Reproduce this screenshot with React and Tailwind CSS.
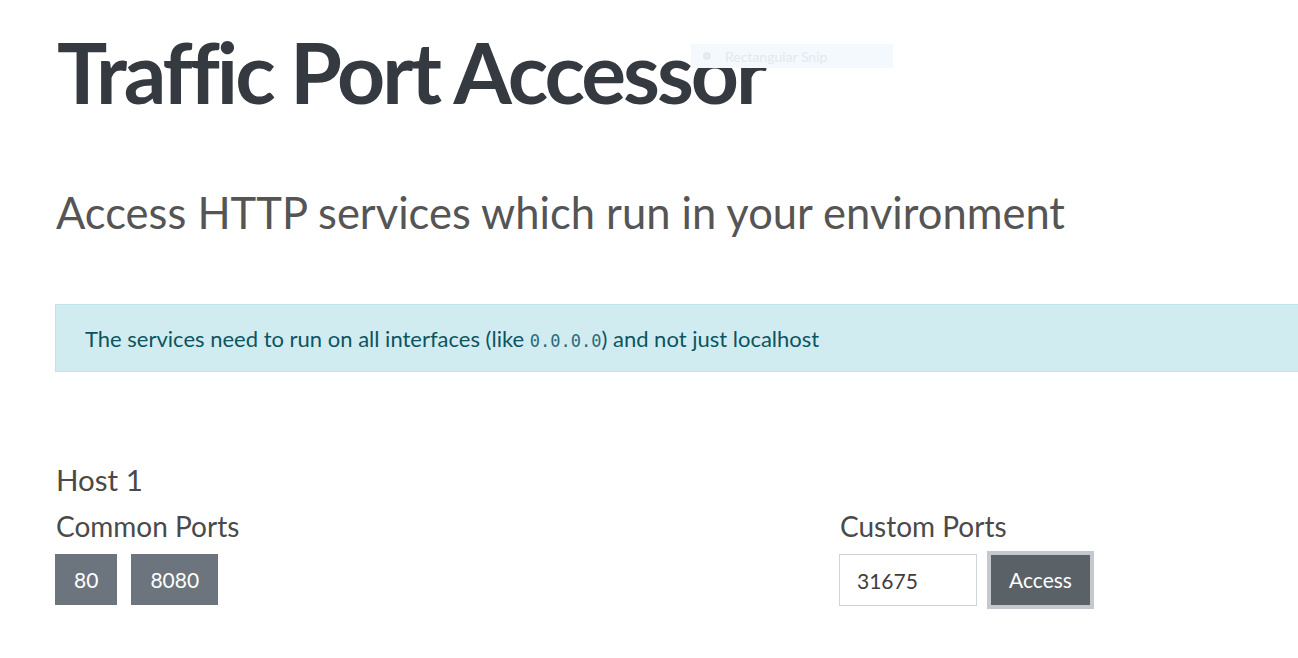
import React from "react";

const ports = ["80", "8080"];

export default function App() {
  return (
    <div className="relative min-h-[658px] w-full overflow-hidden bg-white font-['Lato','Noto_Sans',sans-serif]">
      {/* leftover snip toolbar */}
      <div className="absolute left-[691px] top-[44px] flex h-[24px] w-[202px] items-center gap-[14px] bg-[#f4f9fe] pl-[12px] text-[14px] text-[#e3e8ee]">
        <span className="h-[8px] w-[8px] rounded-full bg-[#e6eaef]" />
        <span>Rectangular Snip</span>
      </div>

      <div className="pl-[55px] pt-[22px]">
        <h1 className="ml-[2px] text-[84px] font-bold leading-[100px] tracking-[-3px] text-[#343a40]">
          Traffic Port Accessor
        </h1>

        <p className="ml-[1px] mt-[60px] text-[43.5px] leading-[60px] text-[#555555]">
          Access HTTP services which run in your environment
        </p>

        <div className="-mr-[20px] mt-[62px] flex h-[68px] items-center border border-[#bee5eb] bg-[#d1ecf1] pl-[29px] text-[22px] text-[#0c5460]">
          <span>
            The services need to run on all interfaces (like{" "}
            <code className="font-['DejaVu_Sans_Mono',monospace] text-[17px] text-[#2a6b78]">
              0.0.0.0
            </code>
            ) and not just localhost
          </span>
        </div>

        <h2 className="ml-[1px] mt-[90px] text-[29.5px] leading-[36px] text-[#4a4a4a]">Host 1</h2>

        <div className="mt-[10px] flex">
          <div className="w-[784px]">
            <h3 className="ml-[1px] text-[28px] leading-[36px] text-[#4a4a4a]">Common Ports</h3>
            <div className="mt-[10px] flex gap-[14px]">
              {ports.map((p) => (
                <button
                  key={p}
                  className="h-[51px] bg-[#6c757d] px-[19px] text-[21px] text-white"
                >
                  {p}
                </button>
              ))}
            </div>
          </div>
          <div>
            <h3 className="ml-[1px] text-[28px] leading-[36px] text-[#4a4a4a]">Custom Ports</h3>
            <div className="mt-[10px] flex items-center gap-[14px]">
              <input
                defaultValue="31675"
                className="h-[52px] w-[138px] border border-[#ced4da] px-[17px] text-[21px] text-[#3d3d3d] outline-none"
              />
              <button className="h-[50px] w-[99px] bg-[#5a6268] text-[21px] text-white ring-4 ring-[#c5c9ce]">
                Access
              </button>
            </div>
          </div>
        </div>
      </div>
    </div>
  );
}
